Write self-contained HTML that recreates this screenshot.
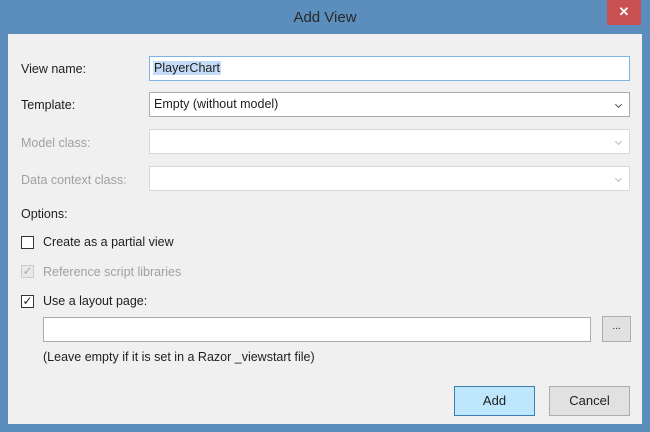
<!DOCTYPE html>
<html><head><style>
body{margin:0;width:650px;height:432px;background:#5b8dbd;font-family:"Liberation Sans",sans-serif;font-size:12.5px;color:#1e1e1e;position:relative;overflow:hidden}
.a{position:absolute}
.title{left:0;top:9px;width:650px;text-align:center;font-size:15px;color:#2a2a2a}
.close{left:607px;top:0;width:34px;height:25px;background:#c75050;color:#fff;font-size:13px;font-weight:bold;text-align:center;line-height:24px}
.panel{left:8px;top:34px;width:634px;height:390px;background:#f0f0f0}
.lbl{left:21px}
.dis{color:#a0a0a0}
.f{left:149px;width:479px;height:23px;background:#fff;border:1px solid #acacac}
.f.d{border-color:#d9d9d9}
.chev{position:absolute;right:8px;top:9px;width:4px;height:4px;border-right:1px solid #555;border-bottom:1px solid #555;transform:rotate(45deg)}
.cb{left:21px;width:13px;height:13px;border:1px solid #333;background:#fff;box-sizing:border-box;font-size:12px;line-height:11px;text-align:center}
.btn{height:30px;box-sizing:border-box;text-align:center;line-height:28px;font-size:13px}
</style></head><body>
<div class="a title">Add View</div>
<div class="a close">✕</div>
<div class="a panel"></div>
<div class="a lbl" style="top:62px">View name:</div>
<div class="a f" style="top:56px;border-color:#7eb4ea"><span style="position:absolute;left:3px;top:4px;background:#c4dcf7;padding:0 1px">PlayerChart</span></div>
<div class="a lbl" style="top:98px">Template:</div>
<div class="a f" style="top:92px"><span style="position:absolute;left:4px;top:4px">Empty (without model)</span><span class="chev"></span></div>
<div class="a lbl dis" style="top:136px">Model class:</div>
<div class="a f d" style="top:129px"><span class="chev" style="border-color:#bbb"></span></div>
<div class="a lbl dis" style="top:173px">Data context class:</div>
<div class="a f d" style="top:166px"><span class="chev" style="border-color:#bbb"></span></div>
<div class="a lbl" style="top:207px">Options:</div>
<div class="a cb" style="top:236px"></div>
<div class="a" style="left:43px;top:235px">Create as a partial view</div>
<div class="a cb" style="top:265px;border-color:#ccc;background:#e8e8e8;color:#aaa">✓</div>
<div class="a dis" style="left:43px;top:265px">Reference script libraries</div>
<div class="a cb" style="top:295px">✓</div>
<div class="a" style="left:43px;top:294px">Use a layout page:</div>
<div class="a" style="left:43px;top:317px;width:546px;height:23px;background:#fff;border:1px solid #acacac"></div>
<div class="a" style="left:602px;top:316px;width:27px;height:24px;background:#e1e1e1;border:1px solid #adadad;text-align:center;font-size:10px;line-height:20px">...</div>
<div class="a" style="left:43px;top:350px">(Leave empty if it is set in a Razor _viewstart file)</div>
<div class="a btn" style="left:454px;top:386px;width:81px;background:#bee6fd;border:1px solid #3c7fb1">Add</div>
<div class="a btn" style="left:549px;top:386px;width:81px;background:#e1e1e1;border:1px solid #adadad">Cancel</div>
</body></html>
